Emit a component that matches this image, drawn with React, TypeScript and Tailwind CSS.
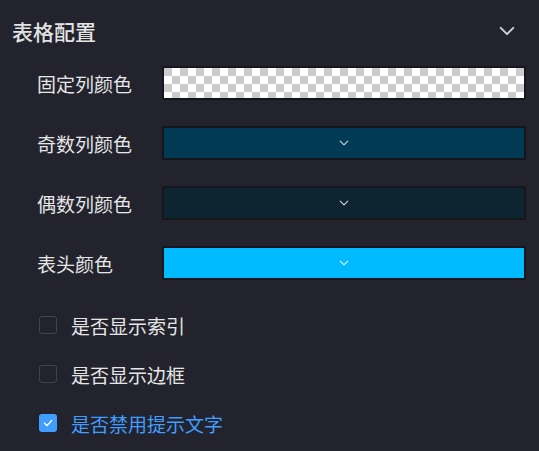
import React from "react";

const font = { fontFamily: '"Noto Sans CJK SC", "Noto Sans", sans-serif' };

function Chevron({ className }: { className?: string }) {
  return (
    <svg viewBox="0 0 16 16" className={className} fill="none" stroke="currentColor" strokeWidth="1.6" strokeLinecap="round" strokeLinejoin="round">
      <path d="M3 5.5 8 10.5 13 5.5" />
    </svg>
  );
}

function ColorRow({ label, children }: { label: string; children: React.ReactNode }) {
  return (
    <div className="flex items-center h-[34px]">
      <div className="w-[162px] pl-[37px] text-[19px] text-[#e6e6e6] leading-none shrink-0">{label}</div>
      <div className="w-[364px] h-[34px] rounded-[2px] bg-[#15161c] p-[2px]">{children}</div>
    </div>
  );
}

function Check({ label, checked }: { label: string; checked?: boolean }) {
  return (
    <div className="flex items-center h-[20px] pl-[39px]">
      {checked ? (
        <div className="w-[18px] h-[18px] rounded-[3px] bg-[#409eff] flex items-center justify-center">
          <svg viewBox="0 0 12 12" className="w-[12px] h-[12px]" fill="none" stroke="#fff" strokeWidth="1.4" strokeLinecap="round" strokeLinejoin="round">
            <path d="M2.5 6.2 5 8.6 9.6 3.6" />
          </svg>
        </div>
      ) : (
        <div className="w-[18px] h-[18px] rounded-[3px] border border-[#42434c] bg-[#22232d]" />
      )}
      <span className={`ml-[14px] text-[19px] leading-none ${checked ? "text-[#409eff]" : "text-[#e6e6e6]"}`}>{label}</span>
    </div>
  );
}

export default function App() {
  return (
    <div className="w-[539px] h-[451px] bg-[#22232d] overflow-hidden" style={font}>
      <div className="flex items-center justify-between h-[32px] mt-[15px] pl-[12px] pr-[22px]">
        <span className="text-[21px] font-medium text-[#e3e3e3] leading-none">表格配置</span>
        <Chevron className="w-[20px] h-[20px] text-[#d0d0d0]" />
      </div>

      <div className="flex flex-col gap-[26px] mt-[19px]">
        <ColorRow label="固定列颜色">
          <div className="w-full h-full bg-[conic-gradient(#fff_25%,#ccc_0_50%,#fff_0_75%,#ccc_0)] bg-[length:16px_16px]" />
        </ColorRow>
        <ColorRow label="奇数列颜色">
          <div className="w-full h-full bg-[#003a54] flex items-center justify-center">
            <Chevron className="w-[12px] h-[12px] text-[#c8d2d8]" />
          </div>
        </ColorRow>
        <ColorRow label="偶数列颜色">
          <div className="w-full h-full bg-[#0d2531] flex items-center justify-center">
            <Chevron className="w-[12px] h-[12px] text-[#c8d2d8]" />
          </div>
        </ColorRow>
        <ColorRow label="表头颜色">
          <div className="w-full h-full bg-[#00baff] flex items-center justify-center">
            <Chevron className="w-[12px] h-[12px] text-[#d6f2ff]" />
          </div>
        </ColorRow>
      </div>

      <div className="flex flex-col gap-[29px] mt-[35px]">
        <Check label="是否显示索引" />
        <Check label="是否显示边框" />
        <Check label="是否禁用提示文字" checked />
      </div>
    </div>
  );
}
